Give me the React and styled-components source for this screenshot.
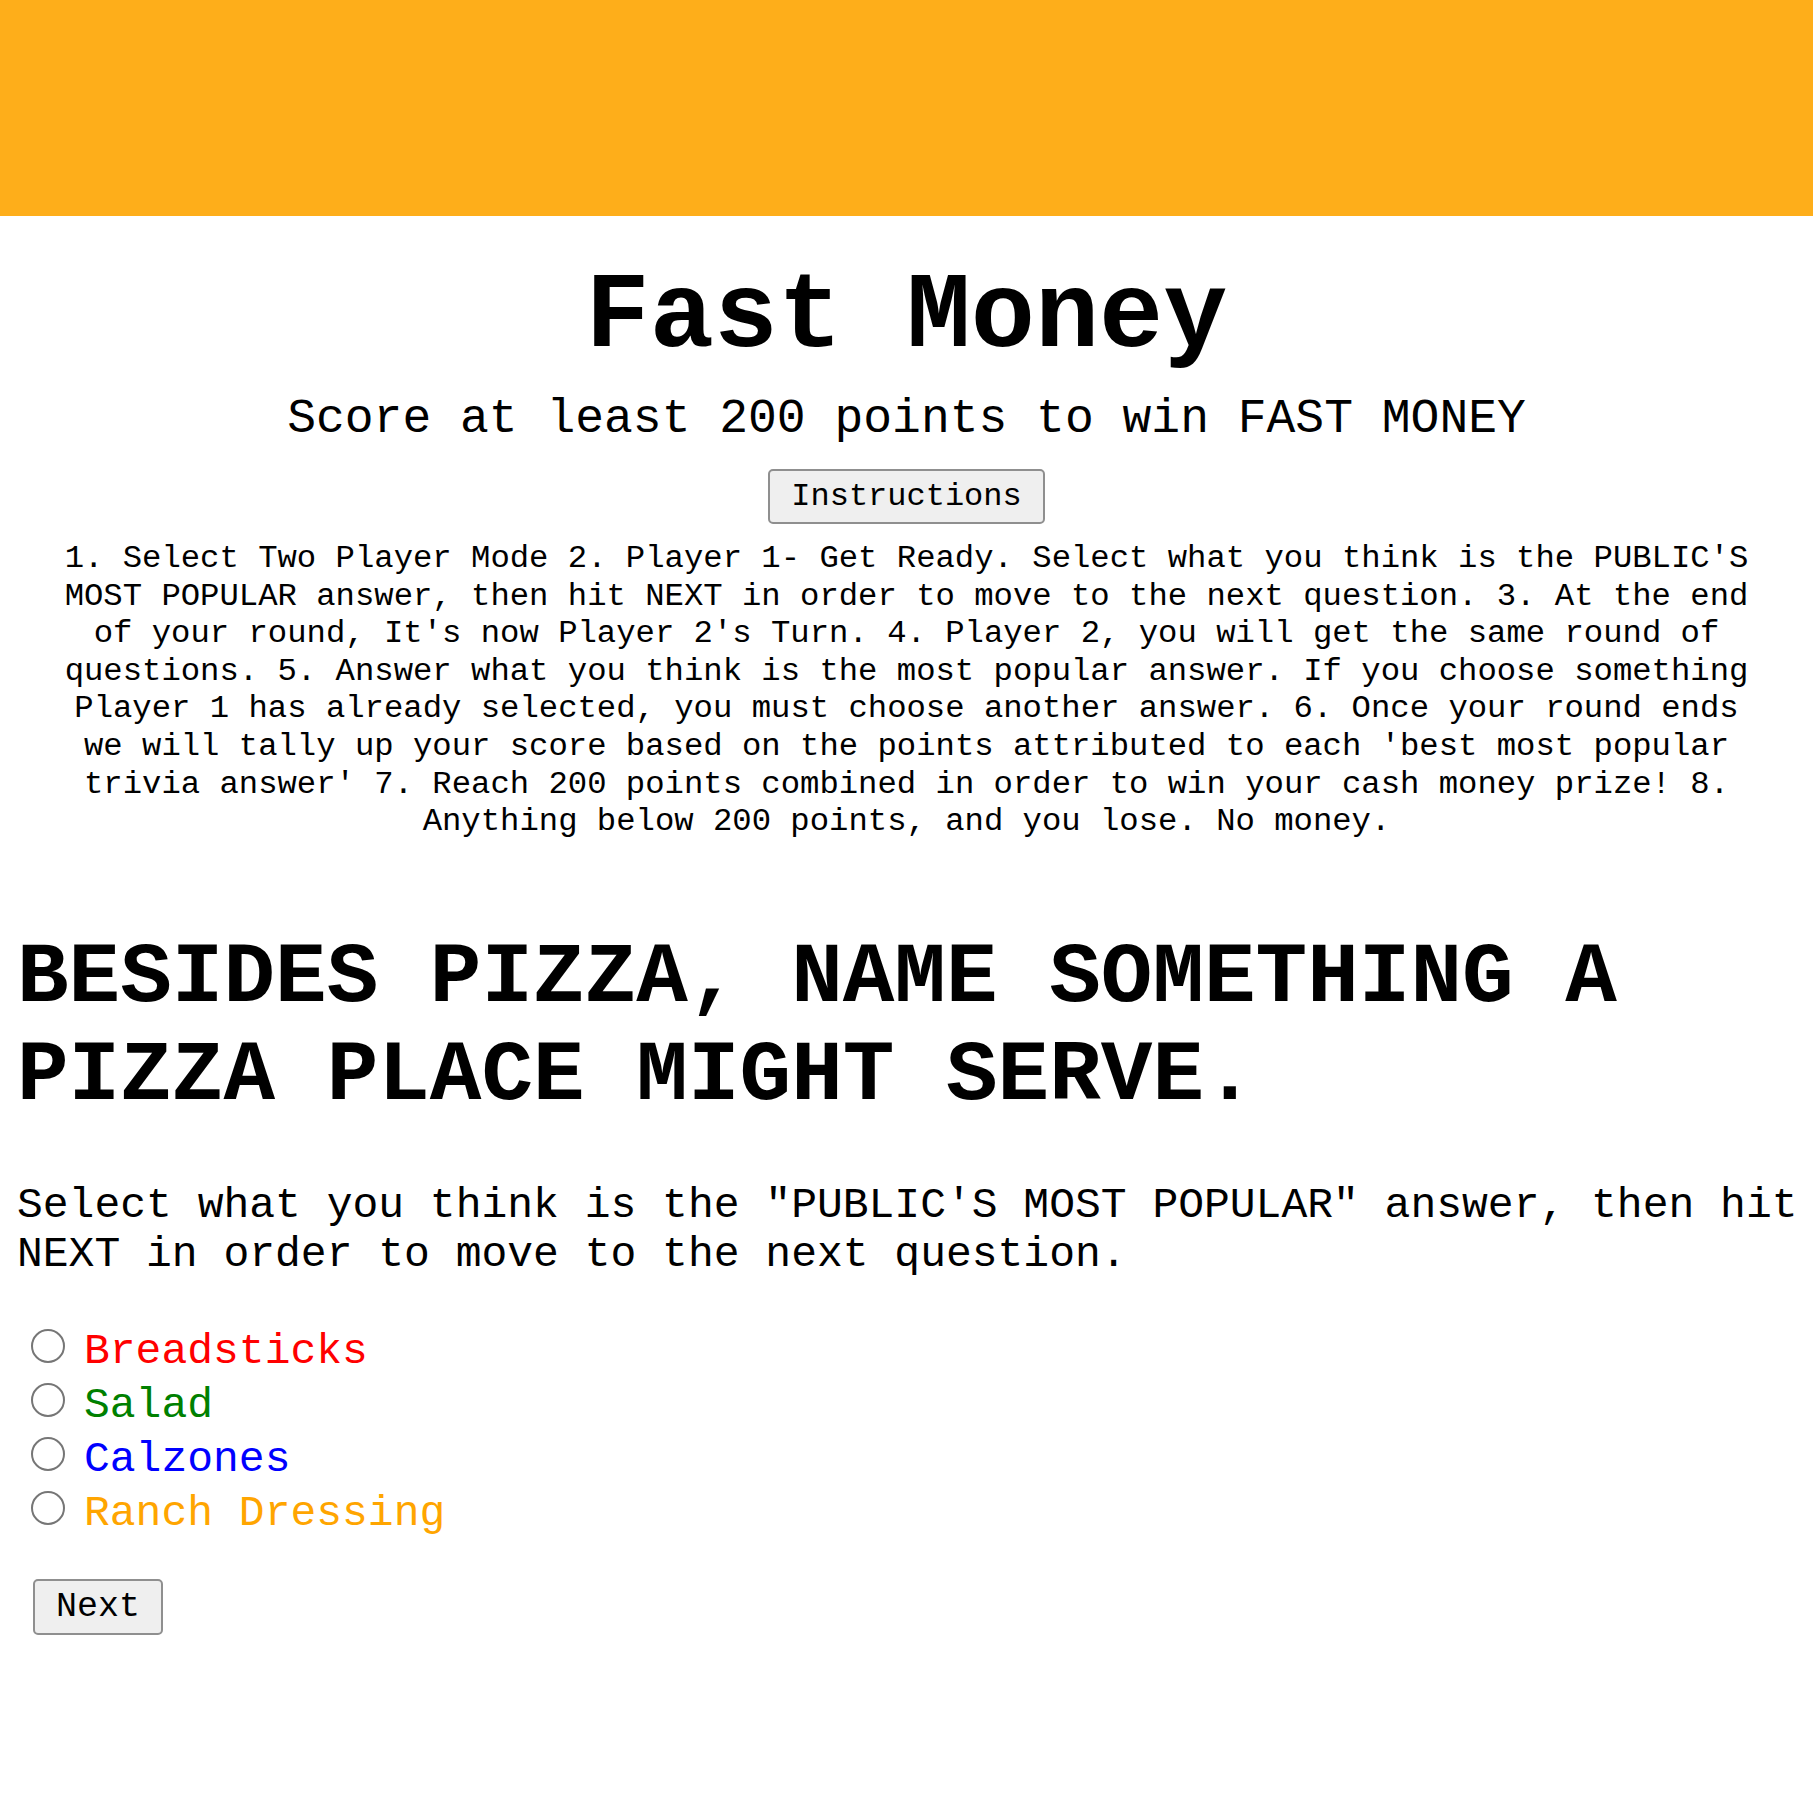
import React from "react";
import styled, { createGlobalStyle } from "styled-components";

const GlobalStyle = createGlobalStyle`
  body {
    margin: 0;
    background: #ffffff;
    font-family: "Liberation Mono", "Courier New", monospace;
    color: #000000;
  }
`;

// top orange banner
const Banner = styled.header`
  height: 216px;
  background-color: #feae1a;
`;

const Main = styled.main`
  padding: 0 6px 0 17px;
`;

const Intro = styled.section`
  display: flex;
  flex-direction: column;
  align-items: center;
  padding-right: 11px;
`;

const Title = styled.h1`
  margin: 41px 0 0;
  font-size: 107px;
  font-weight: 700;
  line-height: normal;
  text-align: center;
`;

const Subtitle = styled.h3`
  margin: 14px 0 0;
  font-size: 48px;
  font-weight: 400;
  line-height: normal;
  text-align: center;
`;

const Button = styled.button`
  font-family: "Liberation Mono", "Courier New", monospace;
  font-size: ${(p) => p.$size}px;
  line-height: normal;
  color: #000000;
  background: #efefef;
  border: 2px solid #8f8f8f;
  border-radius: 5px;
  padding: ${(p) => p.$pad};
  cursor: pointer;
`;

const InstructionsButton = styled(Button)`
  margin-top: 23px;
`;

const Rules = styled.p`
  max-width: 1710px;
  margin: 16px auto 0;
  padding-right: 11px;
  font-size: 32.25px;
  line-height: 37.6px;
  text-align: center;
`;

const Question = styled.h2`
  margin: 88px 0 0;
  font-size: 86px;
  font-weight: 700;
  line-height: normal;
`;

const Prompt = styled.p`
  margin: 56px 0 0;
  font-size: 43px;
  line-height: normal;
`;

const Options = styled.div`
  margin-top: 46px;
  display: flex;
  flex-direction: column;
`;

const Option = styled.label`
  display: flex;
  align-items: flex-start;
  gap: 19px;
  height: 54px;
  font-size: 43px;
  line-height: 54px;
  color: ${(p) => p.$color};
  cursor: pointer;
`;

const Radio = styled.input`
  appearance: none;
  flex: none;
  width: 34px;
  height: 34px;
  margin: 4px 0 0 14px;
  border: 2px solid #767676;
  border-radius: 50%;
  background: #ffffff;
  box-sizing: border-box;

  &:checked {
    border-color: #0075ff;
    box-shadow: inset 0 0 0 6px #ffffff;
    background: #0075ff;
  }
`;

const NextButton = styled(Button)`
  margin: 38px 0 0 16px;
`;

const answers = [
  { label: "Breadsticks", color: "#ff0000" },
  { label: "Salad", color: "#008000" },
  { label: "Calzones", color: "#0000ff" },
  { label: "Ranch Dressing", color: "#ffa500" },
];

const App = () => {
  return (
    <>
      <GlobalStyle />
      <Banner />
      <Main>
        <Intro>
          <Title>Fast Money</Title>
          <Subtitle>Score at least 200 points to win FAST MONEY</Subtitle>
          <InstructionsButton $size={32} $pad="7px 21px">
            Instructions
          </InstructionsButton>
        </Intro>
        <Rules>
          1. Select Two Player Mode 2. Player 1- Get Ready. Select what you
          think is the PUBLIC'S MOST POPULAR answer, then hit NEXT in order to
          move to the next question. 3. At the end of your round, It's now
          Player 2's Turn. 4. Player 2, you will get the same round of
          questions. 5. Answer what you think is the most popular answer. If
          you choose something Player 1 has already selected, you must choose
          another answer. 6. Once your round ends we will tally up your score
          based on the points attributed to each 'best most popular trivia
          answer' 7. Reach 200 points combined in order to win your cash money
          prize! 8. Anything below 200 points, and you lose. No money.
        </Rules>
        <Question>BESIDES PIZZA, NAME SOMETHING A PIZZA PLACE MIGHT SERVE.</Question>
        <Prompt>
          Select what you think is the "PUBLIC'S MOST POPULAR" answer, then hit
          NEXT in order to move to the next question.
        </Prompt>
        <Options>
          {answers.map((a) => (
            <Option key={a.label} $color={a.color}>
              <Radio type="radio" name="answer" value={a.label} />
              {a.label}
            </Option>
          ))}
        </Options>
        <NextButton $size={35} $pad="6px 21px">
          Next
        </NextButton>
      </Main>
    </>
  );
};

export default App;
